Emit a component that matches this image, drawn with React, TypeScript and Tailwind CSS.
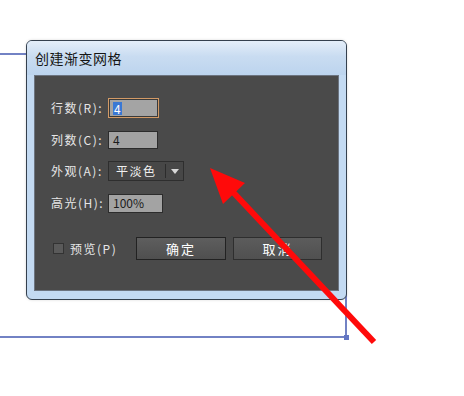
import React from "react";

const cjk = { fontFamily: '"Noto Sans CJK SC", "Liberation Sans", sans-serif' };

function Field({ label, children }: { label: string; children: React.ReactNode }) {
  return (
    <div className="flex items-center h-[20px] pl-[16px]">
      <span className="w-[57px] text-[12px] text-[#e6e6e6] tracking-[1.5px] whitespace-nowrap">{label}</span>
      {children}
    </div>
  );
}

function TextBox({ value, w, h = 18 }: { value: string; w: number; h?: number }) {
  return (
    <div
      className="flex items-center border border-[#2c2c2c] bg-[#a3a3a3] pl-[4px] text-[12px] text-[#1c1c1c] leading-none"
      style={{ width: w, height: h }}
    >
      {value}
    </div>
  );
}

export default function App() {
  return (
    <div className="relative w-[464px] h-[396px] bg-white overflow-hidden" style={cjk}>
      {/* selection lines on the canvas */}
      <div className="absolute left-0 top-[53px] w-[30px] h-[2px] bg-[#7282c4]" />
      <div className="absolute left-0 top-[336px] w-[347px] h-[2px] bg-[#7282c4]" />
      <div className="absolute left-[345px] top-[290px] w-[2px] h-[47px] bg-[#7282c4]" />
      <div className="absolute left-[344px] top-[335px] w-[5px] h-[5px] bg-[#6376c4]" />

      {/* dialog window */}
      <div className="absolute left-[26px] top-[40px] w-[321px] h-[260px] rounded-[6px] border border-[#34404e] bg-[#c3daf2] flex flex-col overflow-hidden shadow-[0_0_3px_rgba(0,0,0,0.15)]">
        <div className="h-[34px] flex items-center pl-[8px] bg-[linear-gradient(180deg,#e4eef9_0%,#c9dcf1_45%,#bcd4ee_100%)]">
          <span className="text-[14px] text-[#151515] tracking-[0.5px]">创建渐变网格</span>
        </div>
        <div className="mx-[7px] h-[216px] bg-[#4a4a4a] border border-[#6c7480] pt-[22px] flex flex-col">
          <Field label="行数(R):">
            <div className="w-[51px] h-[20px] border border-[#d29a66] p-[1px] bg-[#3a3a3a]">
              <div className="w-full h-full bg-[#a4a4a4] flex items-center pl-[3px]">
                <span className="bg-[#3a78d4] text-white text-[12px] leading-[13px] px-[1px]">4</span>
              </div>
            </div>
          </Field>
          <div className="mt-[12px]">
            <Field label="列数(C):">
              <TextBox value="4" w={50} />
            </Field>
          </div>
          <div className="mt-[11px]">
            <Field label="外观(A):">
              <div className="w-[76px] h-[20px] border border-[#2e2e2e] bg-[#474747] flex items-center">
                <span className="flex-1 pl-[7px] text-[12px] text-[#f0f0f0] tracking-[1.5px]">平淡色</span>
                <div className="w-[1px] h-[14px] bg-[#2c2c2c]" />
                <div className="w-[17px] flex justify-center">
                  <svg width="8" height="5" viewBox="0 0 8 5">
                    <path d="M0 0H8L4 5Z" fill="#d8d8d8" />
                  </svg>
                </div>
              </div>
            </Field>
          </div>
          <div className="mt-[12px]">
            <Field label="高光(H):">
              <TextBox value="100%" w={55} h={19} />
            </Field>
          </div>
          <div className="mt-[24px] flex items-center h-[23px] pl-[18px]">
            <div className="w-[11px] h-[11px] border border-[#333] bg-[#5a5a5a]" />
            <span className="ml-[6px] w-[66px] text-[12px] text-[#e6e6e6] tracking-[1.5px]">预览(P)</span>
            <button className="w-[90px] h-[23px] border border-[#222] bg-[linear-gradient(180deg,#5e5e5e,#4f4f4f)] text-[13px] text-white tracking-[2px]">
              确定
            </button>
            <button className="ml-[7px] w-[89px] h-[23px] border border-[#2e2e2e] bg-[linear-gradient(180deg,#5c5c5c,#505050)] text-[13px] text-white tracking-[2px]">
              取消
            </button>
          </div>
        </div>
      </div>

      {/* red arrow annotation */}
      <svg className="absolute inset-0" width="464" height="396" viewBox="0 0 464 396">
        <line x1="232" y1="191" x2="374" y2="342" stroke="#ff0a0a" strokeWidth="6" />
        <polygon points="210,168 245,183 223,204" fill="#ff0a0a" />
      </svg>
    </div>
  );
}
